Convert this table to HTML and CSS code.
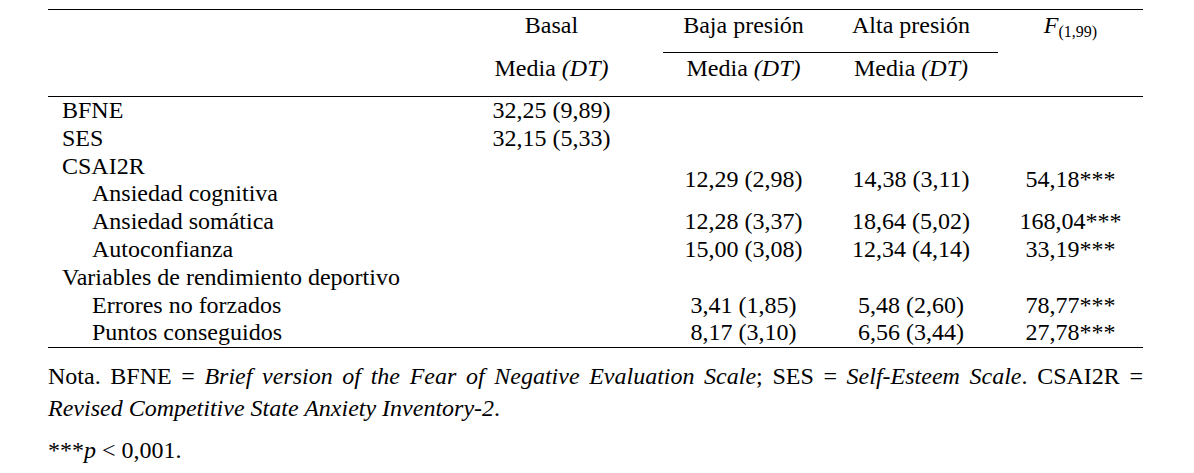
FILE: index.html
```html
<!DOCTYPE html>
<html lang="es">
<head>
<meta charset="utf-8">
<title>Tabla</title>
<link rel="stylesheet" href="styles.css">
</head>
<body>
<div class="page">
  <table class="stats">
    <colgroup>
      <col class="c-lab"><col class="c-bas"><col class="c-baja"><col class="c-alta"><col class="c-f">
    </colgroup>
    <thead>
      <tr class="h1">
        <th class="lab" rowspan="2"></th>
        <th class="top">Basal</th>
        <th class="top grp">Baja presión</th>
        <th class="top grp">Alta presión</th>
        <th class="top fcol" rowspan="2"><i>F</i><sub>(1,99)</sub></th>
      </tr>
      <tr class="h2">
        <th class="sub">Media <i>(DT)</i></th>
        <th class="sub">Media <i>(DT)</i></th>
        <th class="sub">Media <i>(DT)</i></th>
      </tr>
    </thead>
    <tbody>
      <tr><td class="lab">BFNE</td><td>32,25 (9,89)</td><td></td><td></td><td></td></tr>
      <tr><td class="lab">SES</td><td>32,15 (5,33)</td><td></td><td></td><td></td></tr>
      <tr><td class="lab">CSAI2R</td><td rowspan="2"></td><td rowspan="2" class="mid">12,29 (2,98)</td><td rowspan="2" class="mid">14,38 (3,11)</td><td rowspan="2" class="mid">54,18***</td></tr>
      <tr><td class="lab ind">Ansiedad cognitiva</td></tr>
      <tr><td class="lab ind">Ansiedad somática</td><td></td><td>12,28 (3,37)</td><td>18,64 (5,02)</td><td>168,04***</td></tr>
      <tr><td class="lab ind">Autoconfianza</td><td></td><td>15,00 (3,08)</td><td>12,34 (4,14)</td><td>33,19***</td></tr>
      <tr><td class="lab">Variables de rendimiento deportivo</td><td></td><td></td><td></td><td></td></tr>
      <tr><td class="lab ind">Errores no forzados</td><td></td><td>3,41 (1,85)</td><td>5,48 (2,60)</td><td>78,77***</td></tr>
      <tr class="last"><td class="lab ind">Puntos conseguidos</td><td></td><td>8,17 (3,10)</td><td>6,56 (3,44)</td><td>27,78***</td></tr>
    </tbody>
  </table>
  <p class="note">Nota. BFNE = <i>Brief version of the Fear of Negative Evaluation Scale</i>; SES = <i>Self-Esteem Scale</i>. CSAI2R = <i>Revised Competitive State Anxiety Inventory-2</i>.</p>
  <p class="sig">***<i>p</i> &lt; 0,001.</p>
</div>
</body>
</html>
```
FILE: styles.css
```css
html, body {
  margin: 0;
  padding: 0;
  background: #fff;
}
body {
  font-family: "Liberation Serif", "Times New Roman", serif;
  font-size: 24px;
  color: #000;
}
.page {
  width: 1095px;
  margin-left: 48px;
  padding-top: 9px;
}
.stats {
  width: 1095px;
  border-collapse: separate;
  border-spacing: 0;
  table-layout: fixed;
}
.c-lab { width: 392px; }
.c-bas { width: 223px; }
.c-baja { width: 161px; }
.c-alta { width: 174px; }
.c-f { width: 145px; }

.stats th {
  font-weight: normal;
  text-align: center;
  vertical-align: top;
  line-height: 28px;
  padding: 0;
}
.stats .h1 th {
  border-top: 1px solid #000;
  padding: 1px 0 13px;
}
.stats .h1 th.grp {
  border-bottom: 1px solid #000;
}
.stats th.lab,
.stats th.fcol {
  border-bottom: 1px solid #000;
}
.stats .h2 th {
  padding: 1px 0 14px;
  border-bottom: 1px solid #000;
}
.fcol sub {
  font-size: 16px;
  line-height: 0;
  vertical-align: -4px;
}
.stats td {
  padding: 0;
  line-height: 27.8px;
  text-align: center;
  vertical-align: top;
  white-space: nowrap;
}
.stats td.mid {
  vertical-align: middle;
}
.stats td.lab {
  text-align: left;
  padding-left: 14px;
}
.stats td.ind {
  padding-left: 44px;
}
.stats .last td {
  border-bottom: 1px solid #000;
}
.note {
  margin: 12px 0 0;
  line-height: 32px;
  text-align: justify;
}
.sig {
  margin: 10px 0 0;
  line-height: 32px;
}
```
